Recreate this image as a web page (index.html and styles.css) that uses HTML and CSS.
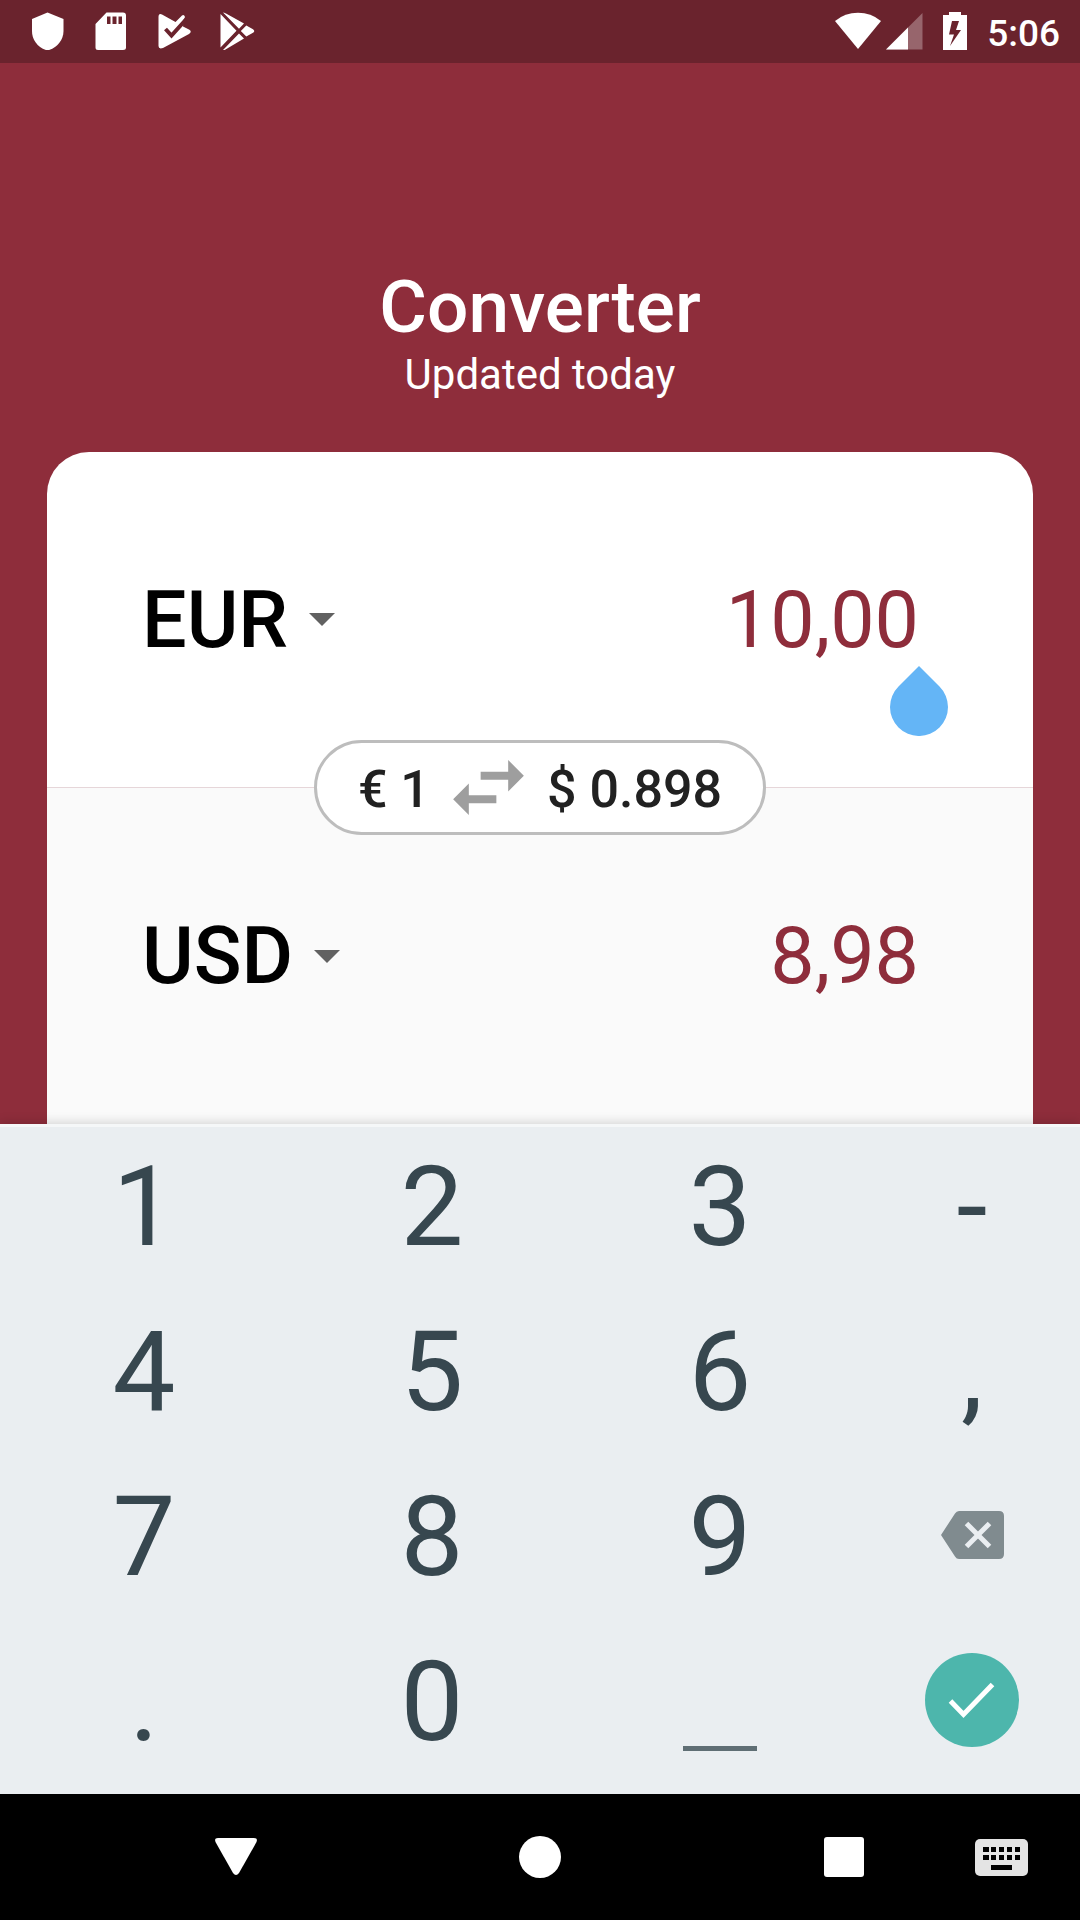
FILE: index.html
```html
<!DOCTYPE html>
<html lang="en">
<head>
<meta charset="utf-8">
<meta name="viewport" content="width=device-width, initial-scale=1">
<title>Converter</title>
<link rel="stylesheet" href="styles.css">
</head>
<body>
<div class="screen">
  <div class="status">
    <div class="status-group notifications">
      <svg width="38" height="38" viewBox="0 0 38 38" aria-hidden="true"><path fill="#fff" d="M18.500 .5 34.500 7V19C34.500 28 28 36 18.500 38.500 9 36 3 28 3 19V7z"/></svg>
      <svg width="38" height="38" viewBox="0 0 38 38" aria-hidden="true"><path fill="#fff" fill-rule="evenodd" d="M14.500 .5H31Q34 .5 34 3.500V35.500Q34 38 31 38H6Q3.500 38 3.500 35.500V12zM15 4.500V12h3.500V4.500zM20.500 4.500V12H24.500V4.500zM26.500 4.500V12H30V4.500z"/></svg>
      <svg width="38" height="38" viewBox="0 0 38 38" aria-hidden="true"><path fill="#fff" d="M3.500 5Q3.500 1 7 2.500L20.500 10 27 3.500Q29 2 30 5L28.500 8 28 14.500 34 17.500Q37.500 19.500 34 22L8 36Q3.500 37.500 3.500 34z"/><path fill="none" stroke="#6a232d" stroke-width="4" d="M10.500 17l6 6.500L31 7.500"/></svg>
      <svg width="38" height="38" viewBox="0 0 38 38" aria-hidden="true"><path fill="#fff" d="M2.500 2L18.500 18.800 2.500 35.500zM5 .5Q6 .5 8 1.500L26 11.500 21 16.700zM21 21.500L26 26.500 7.500 37.500Q6 38.500 5 38zM22.800 19L28.300 13.500 35 17.200Q37.500 19 35 20.800L28.300 24.500z"/></svg>
    </div>
    <div class="status-group system">
      <div class="network">
        <svg width="46" height="38" viewBox="0 0 46 38" aria-hidden="true"><path fill="#fff" d="M0 9Q10 .8 23 .8T46 9L23 37z"/></svg>
        <svg width="37" height="38" viewBox="0 0 37 38" aria-hidden="true"><path fill="#fff" fill-opacity=".3" d="M36.500 1V37.500H0z"/><path fill="#fff" d="M22 15.500V37.500H0z"/></svg>
      </div>
      <svg width="24" height="38" viewBox="0 0 24 38" aria-hidden="true"><path fill="#fff" fill-rule="evenodd" d="M6 0H18V3H24V38H0V3H6zM9 9L6 22.500H11L7 34 18 18H13L16 9z"/></svg>
      <time class="clock">5:06</time>
    </div>
  </div>

  <main class="app">
    <header class="heading">
      <h1 class="title">Converter</h1>
      <p class="subtitle">Updated today</p>
    </header>

    <div class="card">
      <section class="panel panel-from">
        <label class="currency">
          <select class="currency-select" aria-label="Convert from"><option>EUR</option></select>
          <svg width="26" height="13" viewBox="0 0 26 13" aria-hidden="true"><path fill="#616161" d="M0 0H26L13 13z"/></svg>
        </label>
        <div class="amount">
          <input class="amount-input" type="text" inputmode="decimal" value="10,00" aria-label="Amount to convert">
          <svg class="caret-handle" width="58" height="70" viewBox="0 0 58 70" aria-hidden="true"><path fill="#64b5f6" d="M29 0L49.500 20.500A29 29 0 1 1 8.500 20.500z"/></svg>
        </div>
      </section>
      <section class="panel panel-to">
        <button class="rate" type="button" aria-label="Swap currencies">
          <span class="rate-value">€ 1</span>
          <svg width="71" height="55" viewBox="3 5 18 14" aria-hidden="true"><path fill="#9e9e9e" d="M6.990 11L3 15l3.990 4v-3H14v-2H6.990v-3zM21 9l-3.990-4v3H10v2h7.010v3L21 9z"/></svg>
          <span class="rate-value">$ 0.898</span>
        </button>
        <label class="currency">
          <select class="currency-select" aria-label="Convert to"><option>USD</option></select>
          <svg width="26" height="13" viewBox="0 0 26 13" aria-hidden="true"><path fill="#616161" d="M0 0H26L13 13z"/></svg>
        </label>
        <div class="amount">
          <input class="amount-input" type="text" inputmode="decimal" value="8,98" aria-label="Converted amount">
        </div>
      </section>
    </div>
  </main>

  <div class="keypad">
    <button class="key" type="button">1</button>
    <button class="key" type="button">2</button>
    <button class="key" type="button">3</button>
    <button class="key" type="button">-</button>
    <button class="key" type="button">4</button>
    <button class="key" type="button">5</button>
    <button class="key" type="button">6</button>
    <button class="key" type="button">,</button>
    <button class="key" type="button">7</button>
    <button class="key" type="button">8</button>
    <button class="key" type="button">9</button>
    <button class="key key-icon" type="button" aria-label="Delete">
      <svg width="63" height="48" viewBox="0 0 63 48" aria-hidden="true"><path fill="#808b8f" d="M18 0H58Q63 0 63 5V43Q63 48 58 48H18Q15.500 48 14 45.500L0 24 14 2.500Q15.500 0 18 0z"/><path fill="none" stroke="#eaeef1" stroke-width="5" d="M25.500 12.500l23 23M48.500 12.500l-23 23"/></svg>
    </button>
    <button class="key" type="button">.</button>
    <button class="key" type="button">0</button>
    <button class="key key-space" type="button" aria-label="Space">
      <svg width="74" height="5" viewBox="0 0 74 5" aria-hidden="true"><path fill="#5f6e74" d="M0 0H74V5H0z"/></svg>
    </button>
    <button class="key key-icon" type="button" aria-label="Done">
      <svg width="94" height="94" viewBox="0 0 94 94" aria-hidden="true"><circle cx="47" cy="47" r="47" fill="#4db6ac"/><path fill="none" stroke="#fff" stroke-width="5" d="M25.500 48L38.500 61.500 67.500 31.500"/></svg>
    </button>
  </div>

  <nav class="navbar" aria-label="System">
    <button class="nav-button nav-back" type="button" aria-label="Back">
      <svg width="42" height="42" viewBox="0 0 42 42" aria-hidden="true"><path fill="#fff" d="M3 2H39Q43 2 41.500 6L24 37Q21 41 18 37L.5 6Q-1 2 3 2z"/></svg>
    </button>
    <button class="nav-button nav-home" type="button" aria-label="Home">
      <svg width="42" height="42" viewBox="0 0 42 42" aria-hidden="true"><circle cx="21" cy="21" r="21" fill="#fff"/></svg>
    </button>
    <button class="nav-button nav-recent" type="button" aria-label="Recent apps">
      <svg width="40" height="40" viewBox="0 0 40 40" aria-hidden="true"><rect width="40" height="40" rx="3" fill="#fff"/></svg>
    </button>
    <button class="nav-button nav-keyboard" type="button" aria-label="Choose keyboard">
      <svg width="53" height="37" viewBox="0 0 53 37" aria-hidden="true"><rect width="53" height="37" rx="5" fill="#e4e4e4"/><path fill="#000" d="M8 8h6v5H8zM16 8h5v5h-5zM24 8h5v5h-5zM32 8h5v5h-5zM40 8h5v5h-5zM8 16h6v5H8zM16 16h5v5h-5zM24 16h5v5h-5zM32 16h5v5h-5zM40 16h5v5h-5zM16 26h21v5H16z"/></svg>
    </button>
  </nav>
</div>
</body>
</html>
```
FILE: styles.css
```css
* {
  box-sizing: border-box;
}

body {
  margin: 0;
  font-family: Roboto, sans-serif;
  background: #8e2d3b;
}

button,
input,
select {
  margin: 0;
  padding: 0;
  border: 0;
  background: none;
  font: inherit;
  color: inherit;
}

svg {
  display: block;
  flex: none;
}

.screen {
  display: flex;
  flex-direction: column;
  min-height: 100vh;
}

/* Status bar */
.status {
  display: flex;
  justify-content: space-between;
  align-items: flex-end;
  height: 63px;
  padding: 0 20px 13px 29px;
  background: #6a232d;
  color: #fff;
}

.status-group {
  display: flex;
  align-items: flex-end;
}

.notifications {
  gap: 25px;
}

.system {
  gap: 20px;
}

.network {
  display: flex;
  gap: 5px;
}

.clock {
  font-size: 37px;
  font-weight: 500;
  line-height: 32px;
}

/* Converter */
.app {
  flex: 1;
  display: flex;
  flex-direction: column;
  padding: 0 47px;
}

.heading {
  padding: 201px 0 52px;
  text-align: center;
  color: #fff;
}

.title {
  margin: 0;
  font-size: 73px;
  font-weight: 500;
  line-height: 86px;
}

.subtitle {
  margin: 0;
  font-size: 42px;
  line-height: 50px;
}

.card {
  flex: 1;
  display: flex;
  flex-direction: column;
}

.panel {
  position: relative;
  flex: 1;
  display: flex;
  justify-content: space-between;
  align-items: center;
  min-height: 336px;
  padding: 0 114px 0 95px;
}

.panel-from {
  border-radius: 42px 42px 0 0;
  background: #fff;
  border-bottom: 1px solid #e6d6d9;
}

.panel-to {
  background: #fafafa;
}

.currency {
  display: flex;
  align-items: center;
  gap: 20px;
}

.currency-select {
  appearance: none;
  font-size: 79px;
  font-weight: 500;
  line-height: 92px;
  color: #000;
}

.amount {
  position: relative;
  flex: 1;
}

.amount-input {
  display: block;
  width: 100%;
  height: 92px;
  font-size: 79px;
  text-align: right;
  color: #8e2d3b;
}

.caret-handle {
  position: absolute;
  top: 100%;
  right: -29px;
}

.rate {
  position: absolute;
  top: -48px;
  left: 0;
  right: 0;
  display: flex;
  align-items: center;
  gap: 23px;
  width: max-content;
  height: 95px;
  margin: 0 auto;
  padding: 0 41px;
  border: 3px solid #bdbdbd;
  border-radius: 48px;
  background: #fff;
  font-size: 52px;
  font-weight: 500;
  color: #212121;
}

.rate-value {
  padding-top: 4px;
}

/* Keypad */
.keypad {
  position: relative;
  display: grid;
  grid-template-columns: 4fr 4fr 4fr 3fr;
  grid-auto-rows: 165px;
  padding-bottom: 10px;
  background: #eaeef1;
  box-shadow: 0 -2px 10px rgba(0, 0, 0, 0.15), inset 0 3px #f5f7f8;
  color: #37474f;
}

.key {
  display: flex;
  justify-content: center;
  align-items: center;
  font-size: 112px;
  line-height: 132px;
}

.key-icon {
  padding-bottom: 4px;
}

.key-space {
  align-items: flex-end;
  padding-bottom: 33px;
}

/* System navigation */
.navbar {
  display: grid;
  grid-template-columns: 158fr 156fr 148fr 156fr 148fr 156fr 158fr;
  height: 126px;
  background: #000;
}

.nav-button {
  display: flex;
  justify-content: center;
  align-items: center;
}

.nav-back {
  grid-column: 2;
}

.nav-home {
  grid-column: 4;
}

.nav-recent {
  grid-column: 6;
}

.nav-keyboard {
  grid-column: 7;
}
```
